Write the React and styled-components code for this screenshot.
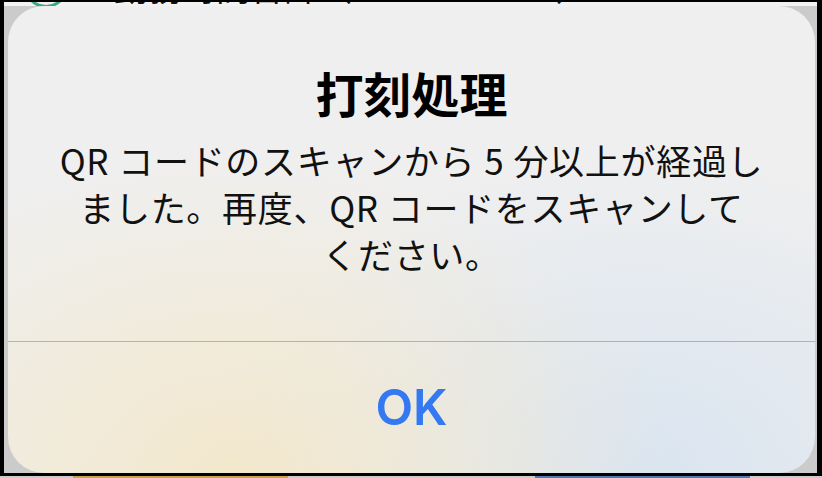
import React from 'react';
import styled, { createGlobalStyle } from 'styled-components';

const GlobalStyle = createGlobalStyle`
	html, body {
		margin: 0;
		padding: 0;
		background: #cbcbcb;
	}
	* {
		box-sizing: border-box;
	}
`;

const Page = styled.div`
	width: 822px;
	height: 478px;
	display: flex;
	flex-direction: column;
	background: #cbcbcb;
	font-family: "Noto Sans CJK JP", "Noto Sans", sans-serif;
	overflow: hidden;
`;

const Frame = styled.div`
	height: 476px;
	display: flex;
	flex-direction: column;
	border-style: solid;
	border-color: #000;
	border-width: 2px 5px 3px 4px;
	background: #cbcbcb;
`;

const Peek = styled.div`
	height: 4px;
	flex-shrink: 0;
	overflow: hidden;
	display: flex;
	align-items: flex-end;
	background: #f2f2f2;
`;

const PeekRow = styled.div`
	display: flex;
	align-items: flex-end;
	gap: 46px;
	padding-left: 20px;
	margin-bottom: -2px;
`;

const Ring = styled.div`
	width: 44px;
	height: 44px;
	border-radius: 50%;
	border: 3px solid #3aa788;
	flex-shrink: 0;
`;

const PeekText = styled.span`
	font-size: 34px;
	line-height: 1;
	color: #111;
	white-space: nowrap;
	margin-bottom: 4px;
`;

const Dialog = styled.div`
	flex: 1;
	margin: 0 2px 0 4px;
	border-radius: 36px;
	display: flex;
	flex-direction: column;
	overflow: hidden;
	background:
		radial-gradient(ellipse 440px 320px at 28% 100%, rgba(243, 232, 205, 1), rgba(243, 232, 205, 0) 100%),
		radial-gradient(ellipse 440px 320px at 78% 100%, rgba(217, 228, 241, 1), rgba(217, 228, 241, 0) 100%),
		linear-gradient(180deg, #efefef 0%, #efefef 50%, #eeeeec 100%);
`;

const Content = styled.div`
	height: 336px;
	display: flex;
	flex-direction: column;
	align-items: center;
	padding-top: 58px;
	border-bottom: 1px solid rgba(60, 60, 67, 0.32);
`;

const Title = styled.h1`
	margin: 0;
	font-size: 48px;
	line-height: 56px;
	font-weight: 700;
	color: #000;
`;

const Message = styled.p`
	margin: 16px 0 0;
	font-size: 35px;
	letter-spacing: 0.7px;
	line-height: 47px;
	font-weight: 400;
	color: #111;
	text-align: center;
`;

const Gap = styled.span`
	display: inline-block;
	width: ${p => p.$w}px;
`;

const ActionButton = styled.button`
	flex: 1;
	border: none;
	background: transparent;
	display: flex;
	align-items: center;
	justify-content: center;
	padding: 0;
	font-family: Inter, "Liberation Sans", sans-serif;
	font-size: 49px;
	font-weight: 600;
	color: #3479f2;
	cursor: pointer;
`;

const Bottom = styled.div`
	height: 2px;
	display: flex;
	background: #cbcbcb;
`;

const Bar = styled.div`
	height: 2px;
	margin-left: ${p => p.$left}px;
	width: ${p => p.$width}px;
	background: ${p => p.$color};
`;

export default function App() {
	return (
		<>
			<GlobalStyle />
			<Page>
				<Frame>
					<Peek>
						<PeekRow>
							<Ring />
							<PeekText>勤務時間合計（09:00〜18:00）</PeekText>
						</PeekRow>
					</Peek>
					<Dialog>
						<Content>
							<Title>打刻処理</Title>
							<Message>
								QR<Gap $w={9} />コードのスキャンから<Gap $w={9} />5<Gap $w={9} />分以上が経過し<br />
								ました。再度、QR<Gap $w={9} />コードをスキャンして<br />
								ください。
							</Message>
						</Content>
						<ActionButton>OK</ActionButton>
					</Dialog>
				</Frame>
				<Bottom>
					<Bar $left={73} $width={215} $color="#c9a24c" />
					<Bar $left={247} $width={215} $color="#4a7bb0" />
				</Bottom>
			</Page>
		</>
	);
}
